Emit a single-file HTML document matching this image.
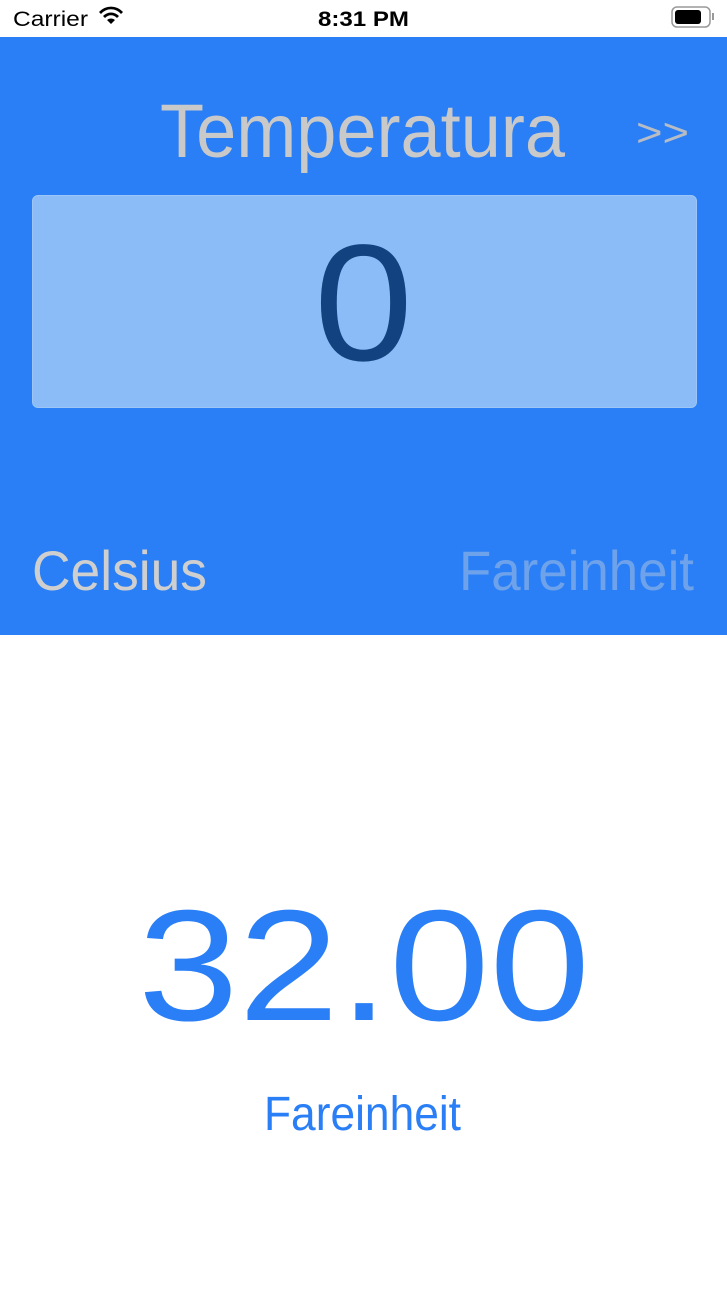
<!DOCTYPE html>
<html><head><meta charset="utf-8"><style>
html,body{margin:0;padding:0;width:727px;height:1294px;overflow:hidden;background:#fff;font-family:"Liberation Sans",sans-serif}
.blue{position:absolute;left:0;top:37px;width:727px;height:598px;background:#2a7ff6}
.box{position:absolute;left:32px;top:195px;width:663px;height:211px;background:#8bbcf7;border:1px solid #9cc6f5;border-radius:6px}
svg{position:absolute;left:0;top:0}
</style></head><body>
<div class="blue"></div>
<div class="box"></div>
<svg width="727" height="1294" font-family="Liberation Sans, sans-serif">
<text x="13" y="26" font-size="21" fill="#000" textLength="75" lengthAdjust="spacingAndGlyphs">Carrier</text>
<path d="M111 24 l-4 -4 a6 6 0 0 1 8 0 z M103 16 a11 11 0 0 1 16 0 l-2 2 a8 8 0 0 0 -12 0z M99 12 a16 16 0 0 1 24 0 l-2 2 a13 13 0 0 0 -20 0z" fill="#000"/>
<text x="318" y="26" font-size="21" font-weight="bold" fill="#000" textLength="91" lengthAdjust="spacingAndGlyphs">8:31 PM</text>
<rect x="672" y="7" width="38" height="20" rx="5" fill="none" stroke="#999" stroke-width="1.5"/>
<rect x="675" y="10" width="26" height="14" rx="3" fill="#000"/>
<rect x="712" y="13" width="2" height="7" fill="#999"/>
<text x="160" y="157" font-size="76" fill="#c9c9c9" textLength="405" lengthAdjust="spacingAndGlyphs">Temperatura</text>
<text x="636" y="146" font-size="40" fill="#b8bcc4" textLength="53" lengthAdjust="spacingAndGlyphs">&gt;&gt;</text>
<text x="314" y="360" font-size="166" fill="#12427f" textLength="99" lengthAdjust="spacingAndGlyphs">0</text>
<text x="32" y="590" font-size="56" fill="#cfcfcf" textLength="175" lengthAdjust="spacingAndGlyphs">Celsius</text>
<text x="459" y="590" font-size="56" fill="#6ea2ea" textLength="235" lengthAdjust="spacingAndGlyphs">Fareinheit</text>
<text x="138" y="1020" font-size="158" fill="#2a7ff6" textLength="452" lengthAdjust="spacingAndGlyphs">32.00</text>
<text x="264" y="1130" font-size="48" fill="#2a7ff6" textLength="197" lengthAdjust="spacingAndGlyphs">Fareinheit</text>
</svg>
</body></html>
